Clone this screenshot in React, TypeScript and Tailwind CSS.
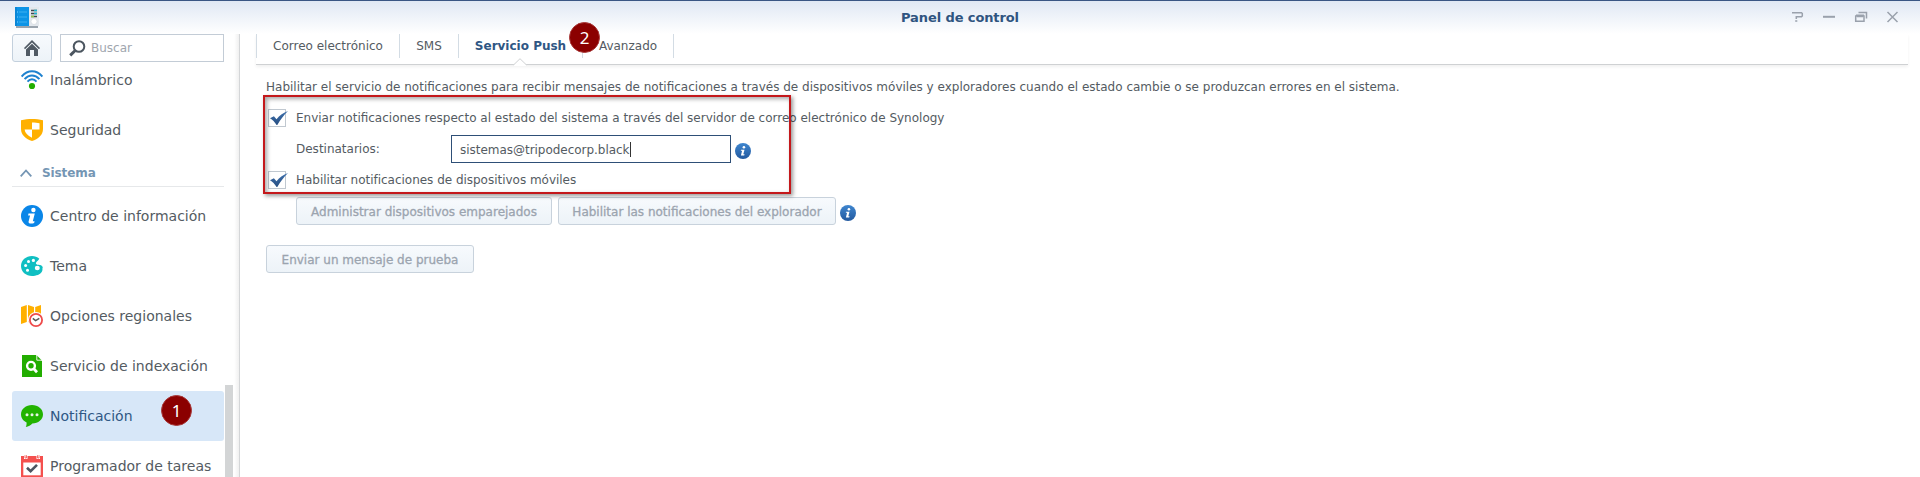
import type { ReactNode } from "react";

function InfoDot() {
  return (
    <svg width="16" height="16" viewBox="0 0 16 16" className="shrink-0">
      <defs>
        <linearGradient id="dot" x1="0" y1="0" x2="0" y2="1">
          <stop offset="0" stopColor="#3f86cf" />
          <stop offset="1" stopColor="#22599f" />
        </linearGradient>
      </defs>
      <circle cx="8" cy="8" r="8" fill="url(#dot)" />
      <circle cx="8.9" cy="4.3" r="1.3" fill="#fff" />
      <path d="M6 6.7H9.5L8.3 11.2H9.6L9.2 12.4H5.9L7.1 7.8H5.8Z" fill="#fff" />
    </svg>
  );
}

const icons: Record<string, ReactNode> = {
  wifi: (
    <>
      <g fill="none" stroke="#1f82cf" strokeWidth="2">
        <path d="M0.6 7.6C6.8 0.6 15.2 0.6 21.4 7.6" />
        <path d="M3.6 10.2C8 5.2 14 5.2 18.4 10.2" />
        <path d="M6.5 12.6C9.2 9.4 12.8 9.4 15.5 12.6" />
      </g>
      <circle cx="11" cy="17" r="3.1" fill="#22ad00" />
    </>
  ),
  shield: (
    <>
      <path d="M11 0C7.500 .1 3.500 .4 0 1.200V10C0 16 5 20 11 22C17 20 22 16 22 10V1.200C18.500 .4 14.500 .1 11 0Z" fill="#ffb000" />
      <path d="M11 3.400C14 3.400 16.500 3.700 18.500 4.200V10.600H11ZM11 10.600V18.700C6.500 16.800 4 14 3.600 10.600Z" fill="#fff" />
    </>
  ),
  info: (
    <>
      <circle cx="11" cy="11" r="11" fill="#0a86e8" />
      <circle cx="12.400" cy="5" r="2.200" fill="#fff" />
      <path d="M7.500 8.500H13.800L11.800 16.300H13.600L13.100 17.900C11 18.900 8.800 18.800 7.900 17.900C7.300 17.200 7.600 16.500 7.800 15.800L9.100 10.400H7.100Z" fill="#fff" />
    </>
  ),
  palette: (
    <>
      <path d="M11 1C5 1 0 5.300 0 11S5 21 11 21C15 21 19.500 19.500 21 16.500C22 14.500 21.500 12 20 10.500C18.500 9.500 16.300 10.300 15.200 9C14 7.500 17.200 5.800 18.300 3.800C16.500 2 13.800 1 11 1Z" fill="#10bfc2" />
      <path d="M15 10.800C17 9.500 21 9.800 21.800 12.200L19.500 16L15 15Z" fill="#10bfc2" />
      <g fill="#fff">
        <circle cx="7.500" cy="6.600" r="1.500" />
        <circle cx="12.400" cy="5.400" r="1.600" />
        <circle cx="4.600" cy="10.600" r="1.500" />
        <circle cx="6.500" cy="15.300" r="1.500" />
        <ellipse cx="16.300" cy="13" rx="2.500" ry="2.200" />
      </g>
    </>
  ),
  map: (
    <>
      <path d="M0 2L5.800 0V17L0 19ZM7 0L13 2V19L7 17ZM14.200 2L20 0V17L14.200 19Z" fill="#ffb000" />
      <circle cx="15" cy="15" r="8" fill="#fff" />
      <circle cx="15" cy="15" r="6.100" fill="#fff" stroke="#ee4b4b" strokeWidth="1.800" />
      <path d="M11.800 13.300L14.600 15.600L18.300 13.300" fill="none" stroke="#555" strokeWidth="1.500" />
    </>
  ),
  index: (
    <>
      <path d="M1 0H15L21 6V22H1Z" fill="#22ad00" />
      <path d="M15.800 0L21 5.200H15.800Z" fill="#22ad00" stroke="#fff" strokeWidth=".9" />
      <circle cx="10" cy="10.800" r="3.900" fill="none" stroke="#fff" strokeWidth="2.400" />
      <path d="M12.800 13.800L16 17.200" stroke="#fff" strokeWidth="2.800" />
    </>
  ),
  chat: (
    <>
      <path d="M11 0C5 0 0 4 0 9.300C0 13 2.300 16 5.600 17.500C5.600 19.300 5.500 20.600 4.800 22C7.500 21.500 9.800 20.300 11.300 18.600C17.300 18.500 22 14.500 22 9.300C22 4 17 0 11 0Z" fill="#22b300" />
      <g fill="#e6f5e2">
        <circle cx="6" cy="9.700" r="1.500" />
        <circle cx="11" cy="9.700" r="1.500" />
        <circle cx="16" cy="9.700" r="1.500" />
      </g>
    </>
  ),
  calendar: (
    <>
      <path d="M0 1H3V4H6.500V1H15.500V4H19V1H22V22H0Z" fill="#f4504e" />
      <path d="M4 .2V3H5.500V.2M16.500 .2V3H18V.2" fill="none" stroke="#f4504e" strokeWidth=".8" />
      <path d="M2.300 7.500H19.700V20.300H2.300Z" fill="#fff" />
      <path d="M6 12.800L9.600 16.200L16 9.800" fill="none" stroke="#4c5560" strokeWidth="2.600" />
    </>
  ),
};

function Item({ icon, label, active }: { icon: string; label: string; active?: boolean }) {
  return (
    <div
      className={
        active
          ? "relative flex h-[50px] shrink-0 items-center rounded-[3px] bg-[#d7e7f8] pl-[9px] text-[#2f5784]"
          : "flex h-[50px] shrink-0 items-center pl-[9px] text-[#545b62]"
      }
    >
      <svg width="22" height="22" viewBox="0 0 22 22" className="shrink-0">
        {icons[icon]}
      </svg>
      <span className="ml-[7px] text-[14px] leading-5 whitespace-nowrap">{label}</span>
      {active && (
        <span className="absolute top-[4px] left-[149px] flex size-[31px] items-center justify-center rounded-full border border-[#a83838] bg-[#8b0000] font-['Noto_Sans'] text-[17px] text-white">
          1
        </span>
      )}
    </div>
  );
}

function Check() {
  return (
    <span className="flex size-[18px] shrink-0 border border-[#c0c8d0] bg-white">
      <svg width="20" height="16" viewBox="0 0 20 16" className="shrink-0 overflow-visible">
        <defs>
          <linearGradient id="tick" x1="0" y1="0" x2="0" y2="1">
            <stop offset="0" stopColor="#3d70ad" />
            <stop offset="1" stopColor="#284f82" />
          </linearGradient>
        </defs>
        <path d="M1 8.200L4.900 6.300L7.500 9.300C10.500 5.500 14.500 2.500 19 1C15 5 11.500 9.500 8.300 15H7.600C5.800 12 3.500 9.500 1 8.200Z" fill="url(#tick)" />
      </svg>
    </span>
  );
}

function Btn({ className, children }: { className: string; children: ReactNode }) {
  return (
    <button
      className={`${className} flex h-[28px] shrink-0 items-center justify-center rounded-[3px] border border-[#c8d2dc] bg-linear-to-b from-[#f7fafd] to-[#edf3f8] pt-[2px] text-[12px] leading-4 whitespace-nowrap text-[#9ba4af] [-webkit-text-stroke:0.3px_#9ba4af]`}
    >
      {children}
    </button>
  );
}

export default function App() {
  return (
    <div className="flex h-[477px] w-[1920px] flex-col overflow-hidden bg-white font-['DejaVu_Sans',sans-serif] text-[12px] text-[#545b62]">
      <header className="flex h-[34px] shrink-0 items-start justify-between border-t border-[#3a5684] bg-linear-to-b from-[#e0e8f4] to-white pr-[20px] pl-[15px]">
        <svg width="24" height="22" viewBox="0 0 24 22" className="mt-[6px]">
          <path d="M1 19H23V21H1Z" fill="#9aa4ae" />
          <path d="M0 0H14V19H0Z" fill="#0d94e6" />
          <path d="M0 0H2V19H0Z" fill="#0a86d6" />
          <path d="M14 0H24V19H14Z" fill="#e3e8ed" />
          <path d="M4 5H12M4 10H12M4 15H12" stroke="#3fb0f0" strokeWidth="1" />
          <path d="M2 5H3M2 10H3M2 15H3" stroke="#7fd0ff" strokeWidth="1" />
          <path d="M16 3.500H22M16 6.500H22M16 9.500H22" stroke="#3c4650" strokeWidth="1.500" />
          <path d="M19 3.500H22M19 6.500H22" stroke="#19b5d0" strokeWidth="1.500" />
          <path d="M16 9.500H19" stroke="#8cc63f" strokeWidth="1.500" />
          <circle cx="19" cy="14.500" r="3" fill="#fff" stroke="#cdd4da" strokeWidth=".6" />
        </svg>
        <h1 className="mt-[7px] ml-[89px] text-[13px] leading-5 font-bold tracking-[-0.1px] text-[#2f5480]">Panel de control</h1>
        <svg width="108" height="12" viewBox="0 0 108 12" className="mt-[10px]" fill="none" stroke="#9aa1ac" strokeWidth="1.500">
          <path d="M0 1.700H9.500L10.300 2.500V5L9.500 5.700H4.300V8M3.200 10H5.300" />
          <path d="M31 5.800H43" strokeWidth="2" />
          <path d="M66.500 1.500H74.500V7.500M64 4.300H72M63.700 5H72V10.300H63.700ZM65 5.500H71" />
          <path d="M95.500 1L105.500 11M105.500 1L95.500 11" />
        </svg>
      </header>

      <div className="flex min-h-0 flex-1">
        <aside className="flex w-[240px] shrink-0 border-r border-[#d4d6d8] bg-linear-to-r from-white from-98% to-[#f0f0f0]">
          <div className="ml-[12px] flex w-[212px] flex-col">
            <div className="flex h-[28px] shrink-0 gap-[8px]">
              <button className="flex w-[40px] items-center justify-center rounded-[3px] border border-[#c3d0dd] bg-linear-to-b from-[#f7fafd] to-[#edf3f8]">
                <svg width="16" height="16" viewBox="0 0 16 16">
                  <path d="M8 0L16 8L15 9.200L8 2.500L1 9.200L0 8Z" fill="#505a64" />
                  <path d="M8 3.800L14 9.500V16H10V10H6V16H2V9.500Z" fill="#505a64" />
                </svg>
              </button>
              <label className="flex w-[164px] items-center border border-[#c3ccd6] pl-[8px] text-[#a0a6ae]">
                <svg width="17" height="17" viewBox="0 0 17 17" fill="none" stroke="#4c5660">
                  <circle cx="10" cy="6.500" r="5.300" strokeWidth="2" />
                  <path d="M6.200 10.500L1.200 15.300" strokeWidth="3" />
                </svg>
                <span className="ml-[5px]">Buscar</span>
              </label>
            </div>
            <nav className="flex min-h-0 flex-1 flex-col overflow-hidden">
              <div className="-mt-[7px] flex flex-col">
                <Item icon="wifi" label="Inalámbrico" />
                <Item icon="shield" label="Seguridad" />
                <div className="flex h-[32px] items-center border-b border-[#e6e8ea] pl-[8px] font-bold text-[#7596b4]">
                  <svg width="12" height="8" viewBox="0 0 12 8" className="mt-[5px]" fill="none" stroke="#7596b4" strokeWidth="1.800">
                    <path d="M0.700 7.300L6 1.500L11.300 7.300" />
                  </svg>
                  <span className="mt-[5px] ml-[10px] leading-4 tracking-[-0.1px]">Sistema</span>
                </div>
                <div className="mt-[4px] flex flex-col">
                  <Item icon="info" label="Centro de información" />
                  <Item icon="palette" label="Tema" />
                  <Item icon="map" label="Opciones regionales" />
                  <Item icon="index" label="Servicio de indexación" />
                  <Item icon="chat" label="Notificación" active />
                  <Item icon="calendar" label="Programador de tareas" />
                </div>
              </div>
            </nav>
          </div>
          <div className="mt-[351px] ml-[1px] w-[8px] bg-[#d3d5d6]" />
        </aside>

        <main className="flex min-w-0 flex-1 flex-col pl-[16px]">
          <div className="relative mr-[12px] flex h-[31px] shrink-0 border-b border-[#cfd1d3] shadow-[0_2px_3px_rgba(0,0,0,0.06)]">
            <div className="flex h-[24px] text-[12px] leading-[25px] whitespace-nowrap">
              <span className="w-[144px] border-x border-[#d3dce4] text-center">Correo electrónico</span>
              <span className="w-[59px] border-r border-[#d3dce4] text-center">SMS</span>
              <span className="w-[124px] border-r border-[#d3dce4] text-center font-bold text-[#2f5784]">Servicio Push</span>
              <span className="w-[91px] border-r border-[#d3dce4] text-center">Avanzado</span>
            </div>
            <svg width="14" height="8" viewBox="0 0 14 8" className="absolute top-[24px] left-[257px]">
              <path d="M0.500 7L7 0.700L13.500 7V8H0.500Z" fill="#fff" />
              <path d="M0.500 7L7 0.700L13.500 7" fill="none" stroke="#cfd1d3" />
            </svg>
            <span className="absolute top-[-12px] left-[313px] flex size-[31px] items-center justify-center rounded-full border border-[#a83838] bg-[#8b0000] font-['Noto_Sans'] text-[17px] text-white">
              2
            </span>
          </div>

          <section className="relative flex flex-col items-start pl-[10px] whitespace-nowrap">
            <p className="mt-[13px] leading-[18px]">
              Habilitar el servicio de notificaciones para recibir mensajes de notificaciones a través de dispositivos móviles y exploradores cuando el estado cambie o se produzcan errores en el sistema.
            </p>
            <div className="mt-[13px] ml-[2px] flex h-[18px] items-center gap-[10px]">
              <Check />
              <span>Enviar notificaciones respecto al estado del sistema a través del servidor de correo electrónico de Synology</span>
            </div>
            <div className="mt-[8px] ml-[30px] flex h-[28px] items-center">
              <span className="w-[155px]">Destinatarios:</span>
              <div className="flex h-[28px] w-[280px] items-center border border-[#2e4f77] pl-[8px]">
                <span className="pt-[2px] tracking-[-0.03px]">sistemas@tripodecorp.black</span>
                <span className="h-[15px] w-px bg-[#333]" />
              </div>
              <span className="mt-[4px] ml-[4px]">
                <InfoDot />
              </span>
            </div>
            <div className="mt-[8px] ml-[2px] flex h-[18px] items-center gap-[10px]">
              <Check />
              <span className="tracking-[-0.02px]">Habilitar notificaciones de dispositivos móviles</span>
            </div>
            <div className="mt-[8px] ml-[30px] flex items-center">
              <Btn className="w-[256px]">Administrar dispositivos emparejados</Btn>
              <Btn className="ml-[6px] w-[278px]">Habilitar las notificaciones del explorador</Btn>
              <span className="mt-[4px] ml-[4px]">
                <InfoDot />
              </span>
            </div>
            <Btn className="mt-[20px] w-[208px]">Enviar un mensaje de prueba</Btn>
            <div className="pointer-events-none absolute top-[30px] left-[7px] h-[99px] w-[528px] border-2 border-[#c4181b] shadow-[2px_2px_4px_rgba(0,0,0,0.4),inset_2px_2px_4px_rgba(0,0,0,0.35)]" />
          </section>
        </main>
      </div>
    </div>
  );
}
